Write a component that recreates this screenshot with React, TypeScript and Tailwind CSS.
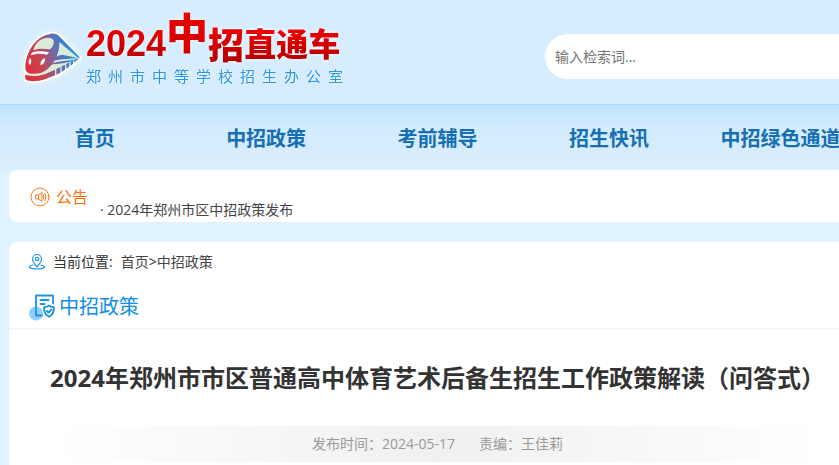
import React from 'react';

const navItems = ['首页', '中招政策', '考前辅导', '招生快讯', '中招绿色通道'];

const TrainLogo = () => (
  <svg
    viewBox="0 0 204 186"
    className="w-[68px] h-[62px] shrink-0 drop-shadow-[0_0_3px_#f4f8ec]"
    aria-hidden="true"
  >
    <defs>
      <linearGradient id="train" gradientUnits="userSpaceOnUse" x1="20" y1="130" x2="185" y2="85">
        <stop offset="0" stopColor="#df2f38" />
        <stop offset="0.3" stopColor="#c8434f" />
        <stop offset="0.6" stopColor="#6a6cac" />
        <stop offset="0.8" stopColor="#2f86d6" />
        <stop offset="1" stopColor="#2a97e6" />
      </linearGradient>
    </defs>
    <path
      d="M22 128C22 85 48 32 98 22c12-2 20 2 26 8l62 64-4 10-62 44-45 15c-20 4-42 5-52-2z"
      fill="#dcead9"
      stroke="#ffffff"
      strokeWidth="9"
      strokeLinejoin="round"
    />
    <path
      fill="url(#train)"
      fillRule="evenodd"
      d="M22 122C24 82 48 32 98 23c14-2 22 4 27 9l62 63-9-1-54-46c2 38-22 80-54 92-16 5-34 5-44-3-4-4-4-9-4-15zM46 73c12-6 32-6 50-3 8-7 13-17 11-26-3-8-14-10-23-8-20 3-34 18-38 37z"
    />
    <path d="M41 80c16-6 36-5 52-1l-6 7c-15-4-33-4-49 2z" fill="#ffffff" />
    <path d="M36 96c-6 8-5 17 0 21 5-7 6-14 0-21zM80 96c-10 5-14 12-12 22 10-5 15-12 12-22z" fill="#ffffff" />
    <path d="M104 106c6-12 16-20 32-19l44 9-32 3c-16 0-30 2-44 7z" fill="url(#train)" />
    <path d="M92 116c24-10 54-12 92-16-28 7-46 14-92 16z" fill="url(#train)" />
    <path d="M22 146c20 6 40 5 62-3l27-12v17l-28 11c-20 7-44 9-56 4-6-3-6-11-5-17z" fill="url(#train)" />
    <path
      d="M115 129l12-6v17l-12 6zM131 121l10-5v15l-10 7zM145 114l9-5v13l-9 6zM158 107l7-4v11l-7 5zM169 101l15-6-15 15z"
      fill="url(#train)"
    />
  </svg>
);

const SpeakerIcon = () => (
  <svg
    viewBox="0 0 20 20"
    className="size-5 shrink-0"
    fill="none"
    stroke="#ff7a1a"
    strokeLinecap="round"
    strokeLinejoin="round"
    aria-hidden="true"
  >
    <circle cx="10" cy="10" r="9" />
    <path d="M6 8h2.500l3.500-2.500v9L8.500 12H6zM8.500 8v4M13.500 8q1 2 0 4M15 6.500q2 3.500 0 7" />
  </svg>
);

const PinIcon = () => (
  <svg
    viewBox="0 0 16 16"
    className="size-4 shrink-0"
    fill="none"
    stroke="#2196e3"
    strokeWidth="1.2"
    strokeLinecap="round"
    aria-hidden="true"
  >
    <path d="M8 13C5 9.500 3.500 7.500 3.500 5a4.500 4.500 0 0 1 9 0c0 2.500-1.500 4.500-4.500 8z" />
    <circle cx="8" cy="5" r="1.700" />
    <path d="M4 11c-7 1.500-3 4 4 4s11-2.500 4-4" />
  </svg>
);

const DocIcon = () => (
  <svg viewBox="0 0 26 27" className="w-[26px] h-[27px] shrink-0" fill="none" aria-hidden="true">
    <circle cx="7" cy="19.500" r="7" fill="#90d0ff" />
    <g stroke="#1c93e6" strokeWidth="1.800" strokeLinecap="round" strokeLinejoin="round">
      <path d="M13 21.500H7V1.500h17v8" />
      <path d="M11.500 6h8M11.500 10h4" />
      <path d="M20 11.500c2 1.500 3 1.500 5 1.800 0 5-1 7.500-5 9.500-4-2-5-4.500-5-9.500 2-.3 3-.3 5-1.800z" />
      <path d="M18 17l1.500 1.500 3-3" />
    </g>
  </svg>
);

const Header = () => (
  <header className="h-[104px] bg-[#d6edff]">
    <div className="flex h-full">
      <a href="#" className="flex w-[545px] shrink-0 items-start pl-[18px]">
        <span className="pt-[26px]">
          <TrainLogo />
        </span>
        <span className="flex flex-col">
          <span className="flex h-[66px] font-black drop-shadow-[0_0_2px_#ffffff]">
            <span className="pt-6 font-['Liberation_Sans'] text-[36px] leading-10 bg-linear-to-b from-[#f50000] from-40% to-[#ae0000] bg-clip-text text-transparent">
              2024
            </span>
            <span className="text-[42px] leading-[66px] bg-linear-to-b from-[#f80000] to-[#c80000] bg-clip-text text-transparent">
              中
            </span>
            <span className="pt-[26px] text-[36px] leading-10 bg-linear-to-b from-[#f50000] from-40% to-[#ae0000] bg-clip-text text-transparent">
              招
            </span>
            <span className="pt-[26px] text-[32px] leading-9 bg-linear-to-b from-[#f50000] from-40% to-[#ae0000] bg-clip-text text-transparent">
              直通车
            </span>
          </span>
          <span className="text-[15px] leading-5 tracking-[7px] text-[#2a96e6] drop-shadow-[0_0_1px_#ffffff]">
            郑州市中等学校招生办公室
          </span>
        </span>
      </a>
      <form className="flex-1 pt-[34px]" onSubmit={(e) => e.preventDefault()}>
        <input
          type="text"
          aria-label="输入检索词"
          placeholder="输入检索词..."
          className="w-full h-[45px] rounded-full bg-white px-2.5 text-sm placeholder:text-[#757575] outline-none"
        />
      </form>
    </div>
  </header>
);

export default function App() {
  return (
    <div className="min-h-screen overflow-hidden bg-[#dff2ff] font-['Open_Sans','Noto_Sans_CJK_SC',sans-serif] text-sm text-[#333333]">
      <div className="min-w-[1209px]">
        <Header />

        <nav className="h-[66px] border-t border-[#addcfd] bg-linear-to-b from-[#c0e4ff] via-[#d3ebfe] via-35% to-[#daefff] pl-[9px]">
          <ul className="grid w-[1200px] grid-cols-7">
            {navItems.map((item) => (
              <li key={item} className="text-center">
                <a href="#" className="whitespace-nowrap text-xl leading-[68px] font-bold text-[#176fb3]">
                  {item}
                </a>
              </li>
            ))}
          </ul>
        </nav>

        <main className="w-[1209px] pl-[9px]">
          <section className="flex h-[52px] rounded-lg bg-white pl-[21px]">
            <h2 className="flex h-[54px] items-center gap-1.5 text-base text-[#ff6f0a]">
              <SpeakerIcon />
              公告
            </h2>
            <a href="#" className="pl-3 pt-[30px] leading-5 text-[#444444]">
              · 2024年郑州市区中招政策发布
            </a>
          </section>

          <article className="mt-5 min-h-60 rounded-lg bg-white">
            <div className="w-[857px]">
              <div className="flex h-10 items-center pl-5">
                <PinIcon />
                <span className="px-2">当前位置:</span>
                <a href="#" className="text-[#444444]">首页</a>
                <span>&gt;</span>
                <a href="#" className="text-[#444444]">中招政策</a>
              </div>

              <h2 className="flex h-12 items-center gap-1 border-b-2 border-[#f5f5f5] pt-1 pl-5 text-xl font-normal text-[#108ee9]">
                <DocIcon />
                中招政策
              </h2>

              <h1 className="pt-[30px] text-center text-2xl leading-9 font-bold whitespace-nowrap">
                2024年郑州市市区普通高中体育艺术后备生招生工作政策解读（问答式）
              </h1>

              <div className="mx-10 mt-[30px] flex h-9 items-center justify-center gap-6 bg-linear-to-r from-white via-[#f0f0f0] to-white text-[#999999]">
                <span>发布时间：2024-05-17</span>
                <span>责编：王佳莉</span>
              </div>
            </div>
          </article>
        </main>
      </div>
    </div>
  );
}
